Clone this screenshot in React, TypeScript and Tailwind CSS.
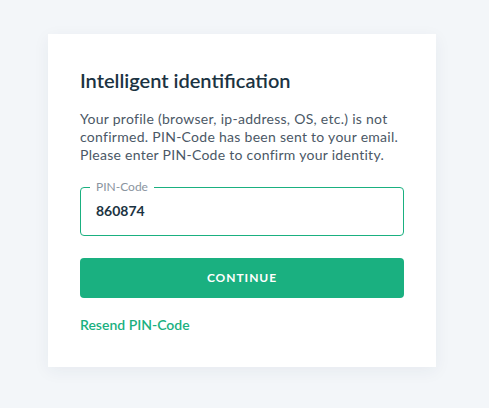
export default function App() {
  return (
    <div className="min-h-[408px] bg-[#f3f6f9] pt-[34px] pl-[48px] font-['Lato',sans-serif]">
      <div className="w-[388px] bg-white px-8 pt-8 pb-8 shadow-[0_4px_16px_rgba(30,50,80,0.06)]">
        <h1 className="text-[20px] leading-[28px] font-semibold text-[#1b3342]">Intelligent identification</h1>
        <p className="mt-4 text-[14px] leading-[18px] tracking-[0.02em] text-[#4b5866]">
          Your profile (browser, ip-address, OS, etc.) is not confirmed. PIN-Code has been sent to your email. Please enter PIN-Code to confirm your identity.
        </p>
        <fieldset className="mt-[17px] h-[55px] rounded-[4px] border border-[#1ab080] px-[15px]">
          <legend className="-ml-[6px] px-[6px] text-[12px] leading-[12px] text-[#8a94a0]">PIN-Code</legend>
          <div className="pt-[8px] text-[14px] leading-[20px] font-bold text-[#1b3342]">860874</div>
        </fieldset>
        <button className="mt-[22px] flex h-[40px] w-full items-center justify-center rounded-[4px] bg-[#1ab080] text-[12px] font-bold tracking-[0.08em] text-white">
          CONTINUE
        </button>
        <div className="mt-[17px] text-[14px] leading-[20px] font-semibold text-[#1ab080]">Resend PIN-Code</div>
      </div>
    </div>
  );
}
